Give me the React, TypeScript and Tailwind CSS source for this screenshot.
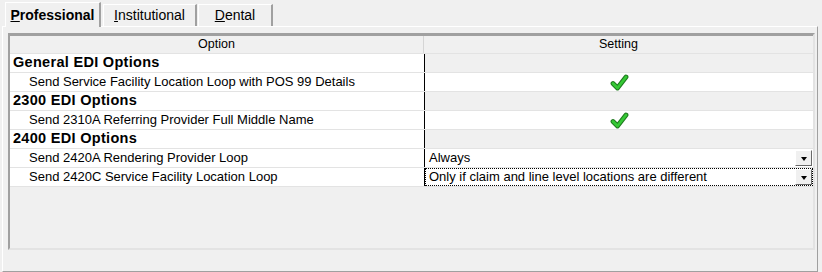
import React from 'react'

type Row =
  | { kind: 'group'; label: string }
  | { kind: 'check'; label: string }
  | { kind: 'combo'; label: string; value: string; focused?: boolean }

const rows: Row[] = [
  { kind: 'group', label: 'General EDI Options' },
  { kind: 'check', label: 'Send Service Facility Location Loop with POS 99 Details' },
  { kind: 'group', label: '2300 EDI Options' },
  { kind: 'check', label: 'Send 2310A Referring Provider Full Middle Name' },
  { kind: 'group', label: '2400 EDI Options' },
  { kind: 'combo', label: 'Send 2420A Rendering Provider Loop', value: 'Always' },
  {
    kind: 'combo',
    label: 'Send 2420C Service Facility Location Loop',
    value: 'Only if claim and line level locations are different',
    focused: true,
  },
]

function CheckMark() {
  return (
    <svg width="19" height="17" viewBox="0 0 19 17">
      <path d="M3 9.5 L7.5 14 L16 3" fill="none" stroke="#1f7a1f" strokeWidth="4.8" strokeLinecap="round" strokeLinejoin="round" />
      <path d="M3 9.5 L7.5 14 L16 3" fill="none" stroke="#35c935" strokeWidth="2.8" strokeLinecap="round" strokeLinejoin="round" />
    </svg>
  )
}

function DropButton() {
  return (
    <div className="w-[17px] h-[16px] flex items-center justify-center bg-[#f0f0f0] border-t border-l border-t-white border-l-white border-r border-b border-r-[#696969] border-b-[#696969]">
      <div className="w-0 h-0 border-l-[3.5px] border-r-[3.5px] border-t-[4px] border-l-transparent border-r-transparent border-t-black mt-[2px]" />
    </div>
  )
}

function Tab({ label, width, active }: { label: string; width: string; active?: boolean }) {
  return (
    <div
      className={
        active
          ? `${width} relative z-10 h-[25px] flex items-center justify-center bg-[#f0f0f0] border-t border-l border-white border-r-2 border-r-[#a0a0a0] font-bold text-[14px] -mb-px`
          : `${width} h-[22px] flex items-center justify-center bg-[#f0f0f0] border-t border-l border-white border-r-2 border-r-[#a0a0a0] text-[14px]`
      }
    >
      <u>{label[0]}</u>
      {label.slice(1)}
    </div>
  )
}

export default function App() {
  return (
    <div className="w-[822px] h-[272px] bg-[#f0f0f0] text-black font-['Liberation_Sans',Arial,sans-serif] text-[13px] overflow-hidden">
      <div className="flex items-end h-[26px] pl-[5px] pt-[2px]">
        <Tab label="Professional" width="w-[96px]" active />
        <div className="ml-[2px]">
          <Tab label="Institutional" width="w-[94px]" />
        </div>
        <div className="ml-px">
          <Tab label="Dental" width="w-[75px]" />
        </div>
      </div>
      <div className="ml-[2px] w-[816px] h-[246px] border-t border-l border-white border-r border-b border-r-[#a0a0a0] border-b-[#a0a0a0] pl-[5px] pt-[6px]">
        <div className="w-[807px] h-[217px] border-2 border-t-[#a0a0a0] border-l-[#a0a0a0] border-r-[#e3e3e3] border-b-[#e3e3e3] bg-[#f0f0f0]">
          <div className="flex h-[19px] border-t border-[#a0a0a0] border-b border-b-[#e3e3e3] text-[12.5px]">
            <div className="w-[414px] flex items-center justify-center border-r border-[#d5d5d5]">Option</div>
            <div className="flex-1 flex items-center justify-center">Setting</div>
          </div>
          {rows.map((r, i) => (
            <div key={i} className="flex h-[19px] border-b border-[#e3e3e3]">
              <div
                className={
                  r.kind === 'group'
                    ? 'w-[414px] bg-white flex items-center pl-[3px] font-bold text-[14.5px] tracking-[0.3px]'
                    : 'w-[414px] bg-white flex items-center pl-[19px]'
                }
              >
                {r.label}
              </div>
              <div className="w-px bg-black" />
              {r.kind === 'group' && <div className="flex-1 bg-[#f0f0f0]" />}
              {r.kind === 'check' && (
                <div className="flex-1 bg-white flex items-center justify-center">
                  <CheckMark />
                </div>
              )}
              {r.kind === 'combo' && (
                <div
                  className={
                    r.focused
                      ? 'flex-1 bg-white flex items-center justify-between border border-dotted border-black pl-[3px]'
                      : 'flex-1 bg-white flex items-center justify-between pl-[4px] pr-px'
                  }
                >
                  <span>{r.value}</span>
                  <DropButton />
                </div>
              )}
            </div>
          ))}
        </div>
      </div>
    </div>
  )
}
